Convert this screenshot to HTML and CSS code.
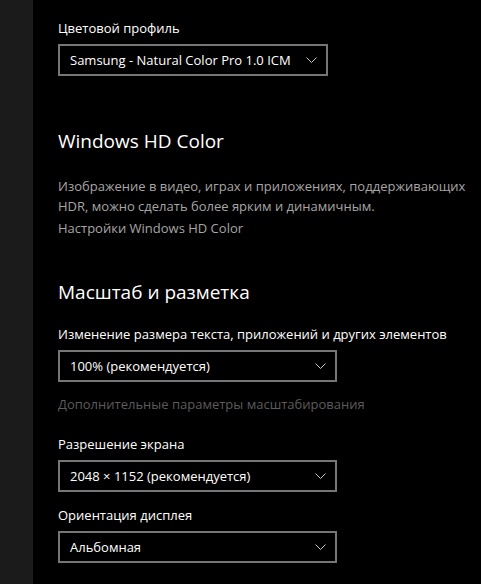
FILE: index.html
```html
<!DOCTYPE html>
<html lang="ru">
<head>
<meta charset="utf-8">
<title>Дисплей</title>
<link rel="stylesheet" href="styles.css">
</head>
<body>
<div class="app">
  <aside class="rail"></aside>
  <main class="content">
    <div class="label first">Цветовой профиль</div>
    <div class="select w1">
      <span>Samsung - Natural Color Pro 1.0 ICM</span>
      <svg class="chev" width="11" height="6" viewBox="0 0 11 6"><polyline points="0.5,0.5 5.5,5.5 10.5,0.5" fill="none" stroke="#c8c8c8" stroke-width="1"/></svg>
    </div>

    <h2 class="heading hd">Windows HD Color</h2>
    <p class="desc">Изображение в видео, играх и приложениях, поддерживающих HDR, можно сделать более ярким и динамичным.</p>
    <div class="link">Настройки Windows HD Color</div>

    <h2 class="heading scale">Масштаб и разметка</h2>
    <div class="label">Изменение размера текста, приложений и других элементов</div>
    <div class="select w2">
      <span>100% (рекомендуется)</span>
      <svg class="chev" width="11" height="6" viewBox="0 0 11 6"><polyline points="0.5,0.5 5.5,5.5 10.5,0.5" fill="none" stroke="#c8c8c8" stroke-width="1"/></svg>
    </div>
    <div class="disabled">Дополнительные параметры масштабирования</div>

    <div class="label res">Разрешение экрана</div>
    <div class="select w2">
      <span>2048 × 1152 (рекомендуется)</span>
      <svg class="chev" width="11" height="6" viewBox="0 0 11 6"><polyline points="0.5,0.5 5.5,5.5 10.5,0.5" fill="none" stroke="#c8c8c8" stroke-width="1"/></svg>
    </div>

    <div class="label orient">Ориентация дисплея</div>
    <div class="select w2">
      <span>Альбомная</span>
      <svg class="chev" width="11" height="6" viewBox="0 0 11 6"><polyline points="0.5,0.5 5.5,5.5 10.5,0.5" fill="none" stroke="#c8c8c8" stroke-width="1"/></svg>
    </div>
  </main>
</div>
</body>
</html>
```

FILE: styles.css
```css
html, body {
  margin: 0;
  padding: 0;
  background: #000;
  height: 100%;
}
body {
  font-family: "Open Sans", "Noto Sans", sans-serif;
  font-size: 13px;
  color: #fff;
}
.app {
  display: flex;
  height: 584px;
  overflow: hidden;
}
.rail {
  width: 33px;
  flex: none;
  background: #1b1b1b;
}
.content {
  padding-left: 25px;
  display: flex;
  flex-direction: column;
  align-items: flex-start;
}
.label {
  line-height: 20px;
  margin-top: 0;
}
.label.first { margin-top: 18px; }
.select {
  box-sizing: border-box;
  margin-top: 6px;
  height: 32px;
  border: 2px solid #767676;
  display: flex;
  align-items: center;
  justify-content: space-between;
  padding: 0 9px 0 10px;
}
.select span { line-height: 20px; }
.w1 { width: 270px; }
.w2 { width: 279px; }
.chev { display: block; flex: none; }
.heading {
  margin: 0;
  font-weight: 400;
  font-size: 19px;
  line-height: 28px;
}
.heading.hd { margin-top: 51px; }
.heading.scale { margin-top: 40px; margin-bottom: 18px; }
.desc {
  margin: 21px 0 0;
  width: 420px;
  line-height: 20px;
  color: #a6a6a6;
}
.link {
  margin-top: 2px;
  line-height: 20px;
  color: #a6a6a6;
}
.disabled {
  margin-top: 12px;
  line-height: 20px;
  color: #5c5c5c;
}
.label.res { margin-top: 20px; }
.label.orient { margin-top: 13px; }
```
